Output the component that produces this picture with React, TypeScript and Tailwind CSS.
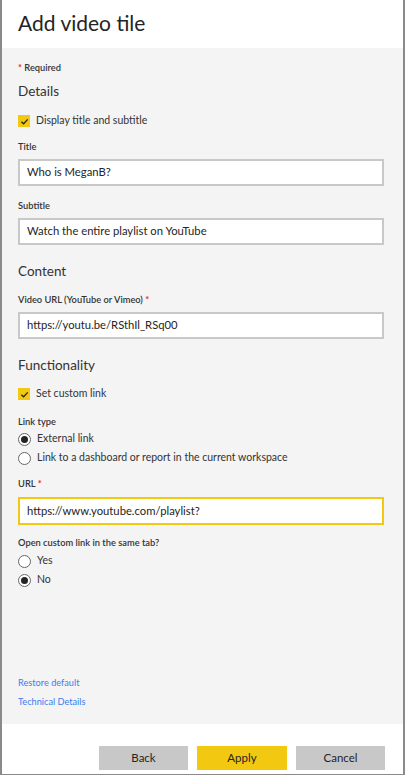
import React from 'react';

const font = { fontFamily: 'Lato, "Open Sans", "Liberation Sans", sans-serif' };

const Req = () => <span className="text-[#e81123]"> *</span>;

const FieldLabel = ({ children, className = '' }: { children: React.ReactNode; className?: string }) => (
  <div className={`text-[9.3px] leading-[14px] font-semibold text-[#333] ${className}`}>{children}</div>
);

const Heading = ({ children, className = '' }: { children: React.ReactNode; className?: string }) => (
  <div className={`text-[13.5px] leading-[20px] text-[#333] ${className}`}>{children}</div>
);

const Check = ({ label, className = '' }: { label: string; className?: string }) => (
  <div className={`flex items-center h-4 ${className}`}>
    <span className="w-[12px] h-[12px] bg-[#f2c811] flex items-center justify-center">
      <svg width="9" height="9" viewBox="0 0 10 10" fill="none">
        <path d="M1.5 5.2 L4 7.5 L8.6 2.6" stroke="#252423" strokeWidth="1.4" />
      </svg>
    </span>
    <span className="ml-[6px] text-[10.5px] text-[#333]">{label}</span>
  </div>
);

const Radio = ({ label, on, className = '' }: { label: string; on?: boolean; className?: string }) => (
  <div className={`flex items-center h-4 ${className}`}>
    <span className="w-[13px] h-[13px] rounded-full border border-[#666] bg-white flex items-center justify-center">
      {on && <span className="w-[7px] h-[7px] rounded-full bg-[#252423]" />}
    </span>
    <span className="ml-[6px] text-[10.5px] text-[#333]">{label}</span>
  </div>
);

const Input = ({ value, active, className = '' }: { value: string; active?: boolean; className?: string }) => (
  <div
    className={`bg-white border-2 flex items-center px-[7px] text-[11.25px] text-[#252423] ${
      active ? 'border-[#f2c811] h-[28px]' : 'border-[#c8c8c8] h-[27px]'
    } ${className}`}
  >
    {value}
  </div>
);

export default function App() {
  return (
    <div style={font} className="w-[405px] h-[775px] flex flex-col border-x-2 border-b border-[#8a8a8a] bg-white">
      <div className="h-[48px] shrink-0 pl-4 flex items-center">
        <h1 className="text-[21px] text-[#252423] leading-none -mt-[4px]">Add video tile</h1>
      </div>

      <div className="flex-1 bg-[#f4f4f4] pl-4 pr-[19px] pt-[13px] pb-[15px] flex flex-col">
        <div className="text-[9.3px] leading-[14px] font-semibold text-[#333]">
          <span className="text-[#e81123]">* </span>Required
        </div>
        <Heading className="mt-[6px]">Details</Heading>
        <Check label="Display title and subtitle" className="mt-[12px]" />

        <FieldLabel className="mt-[11px]">Title</FieldLabel>
        <Input value="Who is MeganB?" className="mt-[5px]" />
        <FieldLabel className="mt-[13px]">Subtitle</FieldLabel>
        <Input value="Watch the entire playlist on YouTube" className="mt-[5px]" />

        <Heading className="mt-[16px]">Content</Heading>
        <FieldLabel className="mt-[12px]">
          Video URL (YouTube or Vimeo)
          <Req />
        </FieldLabel>
        <Input value="https://youtu.be/RSthIl_RSq00" className="mt-[5px]" />

        <Heading className="mt-[16px]">Functionality</Heading>
        <Check label="Set custom link" className="mt-[11px]" />
        <FieldLabel className="mt-[13px]">Link type</FieldLabel>
        <Radio label="External link" on className="mt-[2px]" />
        <Radio label="Link to a dashboard or report in the current workspace" className="mt-[3px]" />

        <FieldLabel className="mt-[11px]">
          URL
          <Req />
        </FieldLabel>
        <Input value="https://www.youtube.com/playlist?" active className="mt-[6px]" />

        <FieldLabel className="mt-[11px]">Open custom link in the same tab?</FieldLabel>
        <Radio label="Yes" className="mt-[3px]" />
        <Radio label="No" on className="mt-[3px]" />

        <div className="mt-auto flex flex-col gap-[5px] text-[9.2px] leading-[14px] text-[#3b7cf0]">
          <a href="#">Restore default</a>
          <a href="#">Technical Details</a>
        </div>
      </div>

      <div className="h-[50px] shrink-0 flex justify-end items-start gap-[9px] pt-[22px] pr-[18px]">
        <button className="w-[89px] h-[24px] bg-[#c8c8c8] text-[11.5px] text-[#252423]">Back</button>
        <button className="w-[90px] h-[24px] bg-[#f2c811] text-[11.5px] text-[#252423]">Apply</button>
        <button className="w-[89px] h-[24px] bg-[#c8c8c8] text-[11.5px] text-[#252423]">Cancel</button>
      </div>
    </div>
  );
}
